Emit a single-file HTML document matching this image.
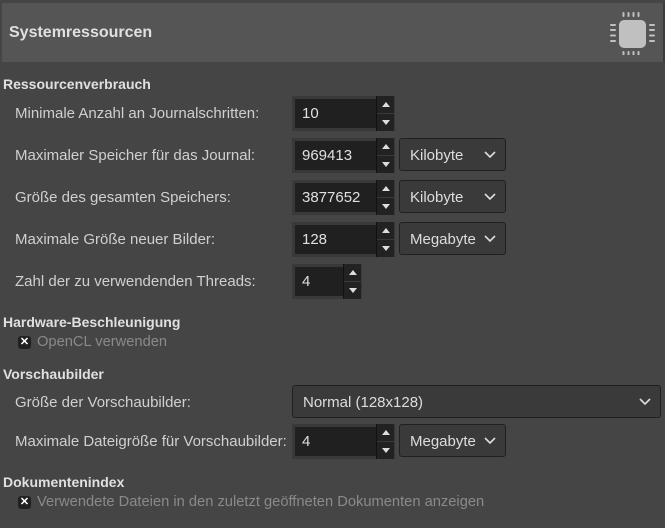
<!DOCTYPE html>
<html><head><style>
body{margin:0;width:665px;height:528px;background:#454545;font-family:"Liberation Sans",sans-serif;color:#d8d8d8;position:relative;overflow:hidden;font-size:15px}
.a{position:absolute}
.hdr{left:2px;top:3px;width:661px;height:59px;background:#555}
.h{font-weight:bold;font-size:14px;color:#e0e0e0}
.lbl{color:#d0d0d0}
.spin{background:#393939;height:35px}
.spin .e{position:absolute;left:3px;top:3px;bottom:3px;right:18px;background:#202020;color:#e0e0e0;padding-left:7px;line-height:29px}
.spin .b{position:absolute;right:1px;top:0;width:17px;height:35px;background:#222;border-left:1px solid #111}
.spin .b:after{content:"";position:absolute;left:0;right:0;top:17px;border-top:1px solid #3a3a3a}
.up,.dn{position:absolute;left:5px;width:0;height:0;border-left:4px solid transparent;border-right:4px solid transparent}
.up{top:6px;border-bottom:5px solid #ddd}
.dn{top:24px;border-top:5px solid #ddd}
.combo{background:#3a3a3a;border:1px solid #202020;border-radius:3px;height:33px;line-height:33px;padding-left:10px;box-sizing:border-box;color:#ddd}
.combo svg{position:absolute;right:9px;top:12px}
.cb{width:13px;height:13px;background:#202020;border-radius:3px;color:#fff;font-size:11px;line-height:13px;text-align:center;font-weight:bold}
.dis{color:#8a8a8a;font-size:14.7px}
</style></head><body>
<div class="a hdr"></div>
<div class="a" style="left:663px;top:3px;width:2px;height:59px;background:#3c3c3c"></div>
<div class="a h" style="left:9px;top:24px;font-size:16px">Systemressourcen</div>
<svg class="a" style="left:605px;top:10px" width="55" height="45" viewBox="605 10 55 45">
<rect x="619" y="20" width="27" height="28" rx="5" fill="#c0c0c0"/>
<g fill="#c0c0c0"><rect x="622.5" y="12" width="2" height="5" rx="1"/><rect x="627.5" y="12" width="2" height="5" rx="1"/><rect x="632.5" y="12" width="2" height="5" rx="1"/><rect x="637.5" y="12" width="2" height="5" rx="1"/>
<rect x="622.5" y="51" width="2" height="5" rx="1"/><rect x="627.5" y="51" width="2" height="5" rx="1"/><rect x="632.5" y="51" width="2" height="5" rx="1"/><rect x="637.5" y="51" width="2" height="5" rx="1"/>
<rect x="610" y="24" width="6" height="2" rx="1"/><rect x="610" y="29" width="6" height="2" rx="1"/><rect x="610" y="34.5" width="6" height="2" rx="1"/><rect x="610" y="40" width="6" height="2" rx="1"/>
<rect x="649" y="24" width="6" height="2" rx="1"/><rect x="649" y="29" width="6" height="2" rx="1"/><rect x="649" y="34.5" width="6" height="2" rx="1"/><rect x="649" y="40" width="6" height="2" rx="1"/></g></svg>

<div class="a h" style="left:3px;top:76px">Ressourcenverbrauch</div>
<div class="a lbl" style="left:15px;top:105px">Minimale Anzahl an Journalschritten:</div>
<div class="a lbl" style="left:15px;top:147px">Maximaler Speicher für das Journal:</div>
<div class="a lbl" style="left:15px;top:189px">Größe des gesamten Speichers:</div>
<div class="a lbl" style="left:15px;top:231px">Maximale Größe neuer Bilder:</div>
<div class="a lbl" style="left:15px;top:273px">Zahl der zu verwendenden Threads:</div>

<div class="a spin" style="left:292px;top:96px;width:103px"><div class="e">10</div><div class="b"><i class="up"></i><i class="dn"></i></div></div>
<div class="a spin" style="left:292px;top:138px;width:103px"><div class="e">969413</div><div class="b"><i class="up"></i><i class="dn"></i></div></div>
<div class="a spin" style="left:292px;top:180px;width:103px"><div class="e">3877652</div><div class="b"><i class="up"></i><i class="dn"></i></div></div>
<div class="a spin" style="left:292px;top:222px;width:103px"><div class="e">128</div><div class="b"><i class="up"></i><i class="dn"></i></div></div>
<div class="a spin" style="left:292px;top:264px;width:70px"><div class="e">4</div><div class="b"><i class="up"></i><i class="dn"></i></div></div>

<div class="a combo" style="left:399px;top:138px;width:107px">Kilobyte<svg width="12" height="8"><path d="M1 1l5 5 5-5" stroke="#ddd" stroke-width="1.6" fill="none"/></svg></div>
<div class="a combo" style="left:399px;top:180px;width:107px">Kilobyte<svg width="12" height="8"><path d="M1 1l5 5 5-5" stroke="#ddd" stroke-width="1.6" fill="none"/></svg></div>
<div class="a combo" style="left:399px;top:222px;width:107px">Megabyte<svg width="12" height="8"><path d="M1 1l5 5 5-5" stroke="#ddd" stroke-width="1.6" fill="none"/></svg></div>

<div class="a h" style="left:3px;top:314px">Hardware-Beschleunigung</div>
<div class="a cb" style="left:18px;top:336px">✕</div>
<div class="a dis" style="left:37px;top:334px">OpenCL verwenden</div>

<div class="a h" style="left:3px;top:366px">Vorschaubilder</div>
<div class="a lbl" style="left:15px;top:394px">Größe der Vorschaubilder:</div>
<div class="a combo" style="left:292px;top:385px;width:369px">Normal (128x128)<svg width="12" height="8"><path d="M1 1l5 5 5-5" stroke="#ddd" stroke-width="1.6" fill="none"/></svg></div>
<div class="a lbl" style="left:15px;top:433px">Maximale Dateigröße für Vorschaubilder:</div>
<div class="a spin" style="left:292px;top:424px;width:103px"><div class="e">4</div><div class="b"><i class="up"></i><i class="dn"></i></div></div>
<div class="a combo" style="left:399px;top:424px;width:107px">Megabyte<svg width="12" height="8"><path d="M1 1l5 5 5-5" stroke="#ddd" stroke-width="1.6" fill="none"/></svg></div>

<div class="a h" style="left:3px;top:474px">Dokumentenindex</div>
<div class="a cb" style="left:18px;top:496px">✕</div>
<div class="a dis" style="left:37px;top:494px">Verwendete Dateien in den zuletzt geöffneten Dokumenten anzeigen</div>
</body></html>
